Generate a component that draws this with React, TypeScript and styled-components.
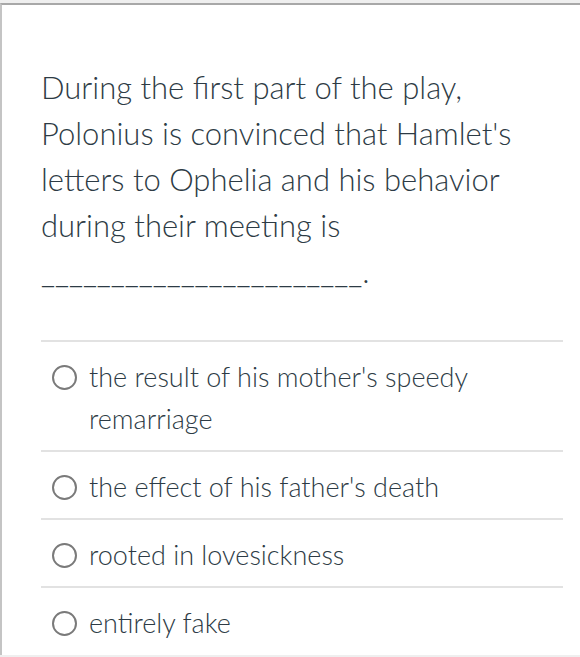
import React from 'react';
import styled, { createGlobalStyle } from 'styled-components';

const GlobalStyle = createGlobalStyle`
  html, body {
    margin: 0;
    padding: 0;
    background: #ffffff;
  }
  body {
    font-family: Lato, "Noto Sans", sans-serif;
    font-weight: 300;
    color: #2d3b45;
  }
`;

const Frame = styled.div`
  background: #efefef;
  padding-top: 3px;
  min-height: 657px;
  box-sizing: border-box;
`;

const Panel = styled.div`
  background: #ffffff;
  border-top: 2px solid #a8a8a8;
  border-left: 2px solid #c4c4c4;
  min-height: 652px;
  box-sizing: border-box;
  padding: 59px 17px 0 39px;
`;

const Question = styled.p`
  margin: 0 0 46px;
  font-size: 31px;
  font-weight: 300;
  line-height: 46px;
  color: #2d3b45;
`;

const Options = styled.div`
  display: flex;
  flex-direction: column;
`;

const Option = styled.label`
  display: flex;
  align-items: flex-start;
  gap: 12px;
  padding: 14px 0 10px 11px;
  border-top: 2px solid #e2e2e2;
  cursor: pointer;
`;

const Radio = styled.span`
  flex: none;
  width: 21px;
  height: 21px;
  margin-top: 9px;
  border: 2.5px solid #7a7a7a;
  border-radius: 50%;
`;

const OptionText = styled.span`
  font-size: 27px;
  font-weight: 300;
  line-height: 42px;
  color: #2d3b45;
`;

const answers = [
  "the result of his mother's speedy remarriage",
  "the effect of his father's death",
  'rooted in lovesickness',
  'entirely fake',
];

function App() {
  return (
    <>
      <GlobalStyle />
      <Frame>
        <Panel>
          <Question>
            During the first part of the play, Polonius is convinced that
            Hamlet's letters to Ophelia and his behavior during their meeting
            is _______________________.
          </Question>
          <Options>
            {answers.map((answer) => (
              <Option key={answer}>
                <Radio />
                <OptionText>{answer}</OptionText>
              </Option>
            ))}
          </Options>
        </Panel>
      </Frame>
    </>
  );
}

export default App;
